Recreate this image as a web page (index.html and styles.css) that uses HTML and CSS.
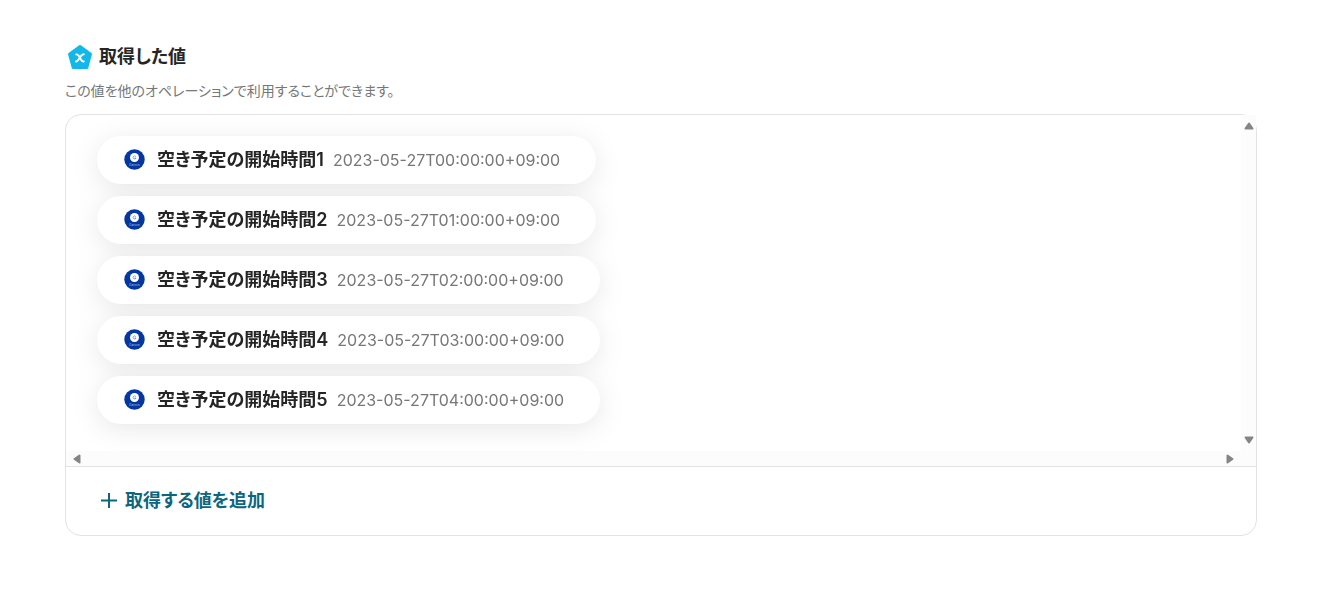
FILE: index.html
```html
<!DOCTYPE html>
<html lang="ja">
<head>
    <meta charset="UTF-8">
    <meta name="viewport" content="width=device-width, initial-scale=1.0">
    <title>取得した値</title>
    <link rel="stylesheet" href="styles.css">
</head>
<body>
    <svg class="symbols" aria-hidden="true">
        <symbol id="garoon" viewBox="0 0 22 22">
            <circle cx="10.500" cy="10.500" r="10.2" fill="#0537a0"/>
            <circle cx="10.500" cy="8.500" r="4.5" fill="#fff"/>
            <path d="M11.800 7.600a1.500 1.500 0 1 0 .2 1.400h-1.300" fill="none" stroke="#6a86cc" stroke-width="0.8"/>
            <text x="10.500" y="17" class="logo-text">Garoon</text>
        </symbol>
    </svg>

    <main class="output">
        <header class="output-header">
            <h1 class="title">
                <svg class="title-icon" viewBox="0 0 26 26" aria-hidden="true">
                    <path d="M13 2.5 23.5 10.2 19.8 23.500H6.2L2.5 10.2Z" fill="#12b8ea" stroke="#12b8ea" stroke-width="3" stroke-linejoin="round"/>
                    <path d="M9.200 10.400c1.600-.4 2.400.6 3.600 3.100s2.200 4.400 4 4M16.900 10.300c-1.500-.4-2.600.7-4 3.100s-2.200 4.300-3.900 4.100" fill="none" stroke="#fff" stroke-width="1.900" stroke-linecap="round"/>
                </svg>
                取得した値
            </h1>
            <p class="description">この値を他のオペレーションで利用することができます。</p>
        </header>

        <section class="panel">
            <div class="scroll-area">
                <ul class="values">
                    <li class="value">
                        <svg class="value-icon" aria-hidden="true"><use href="#garoon"/></svg>
                        <span class="value-name">空き予定の開始時間1</span>
                        <span class="value-sample">2023-05-27T00:00:00+09:00</span>
                    </li>
                    <li class="value">
                        <svg class="value-icon" aria-hidden="true"><use href="#garoon"/></svg>
                        <span class="value-name">空き予定の開始時間2</span>
                        <span class="value-sample">2023-05-27T01:00:00+09:00</span>
                    </li>
                    <li class="value">
                        <svg class="value-icon" aria-hidden="true"><use href="#garoon"/></svg>
                        <span class="value-name">空き予定の開始時間3</span>
                        <span class="value-sample">2023-05-27T02:00:00+09:00</span>
                    </li>
                    <li class="value">
                        <svg class="value-icon" aria-hidden="true"><use href="#garoon"/></svg>
                        <span class="value-name">空き予定の開始時間4</span>
                        <span class="value-sample">2023-05-27T03:00:00+09:00</span>
                    </li>
                    <li class="value">
                        <svg class="value-icon" aria-hidden="true"><use href="#garoon"/></svg>
                        <span class="value-name">空き予定の開始時間5</span>
                        <span class="value-sample">2023-05-27T04:00:00+09:00</span>
                    </li>
                </ul>
                <div class="track track-y" aria-hidden="true">
                    <svg class="arrow" viewBox="0 0 10 8"><path d="M5 1.500 8.500 6.500h-7Z"/></svg>
                    <svg class="arrow" viewBox="0 0 10 8"><path d="M5 6.500 1.500 1.500h7Z"/></svg>
                </div>
                <div class="track track-x" aria-hidden="true">
                    <svg class="arrow arrow-side" viewBox="0 0 8 10"><path d="M1.500 5 6.500 1.500v7Z"/></svg>
                    <svg class="arrow arrow-side" viewBox="0 0 8 10"><path d="M6.500 5 1.500 1.500v7Z"/></svg>
                </div>
                <div class="corner"></div>
            </div>
            <footer class="panel-footer">
                <button type="button" class="add-button">
                    <svg class="add-icon" viewBox="0 0 16 16" aria-hidden="true"><path d="M8 0v15M0 7.500h16"/></svg>
                    取得する値を追加
                </button>
            </footer>
        </section>
    </main>
</body>
</html>
```
FILE: styles.css
```css
:root {
    --border-color: #e3e3e3;
    --text-color: #252525;
    --muted-color: #777777;
    --link-color: #0b6680;
    --track-color: #fcfcfc;
}

* {
    margin: 0;
    padding: 0;
    box-sizing: border-box;
}

body {
    font-family: Inter, "Noto Sans CJK JP", sans-serif;
    font-feature-settings: "palt";
    background-color: #ffffff;
    color: var(--text-color);
}

.symbols {
    display: none;
}

.logo-text {
    font-size: 3px;
    text-anchor: middle;
    fill: #a9bde6;
}

.output {
    padding: 44px 69px 55px 65px;
}

.output-header {
    margin-bottom: 12px;
}

.title {
    display: flex;
    align-items: center;
    gap: 6px;
    padding-left: 2px;
    font-size: 18px;
    font-weight: 600;
    line-height: 26px;
}

.title-icon {
    width: 26px;
    height: 26px;
}

.description {
    margin-top: 10px;
    font-size: 14px;
    line-height: 22px;
    color: var(--muted-color);
}

.panel {
    border: 1px solid var(--border-color);
    border-radius: 16px;
}

.scroll-area {
    display: grid;
    grid-template-columns: 1fr 15px;
    grid-template-rows: auto 15px;
    border-bottom: 1px solid var(--border-color);
    overflow: hidden;
}

/* One shadow for the whole list, so it never falls on a neighbouring pill */
.values {
    display: flex;
    flex-direction: column;
    align-items: flex-start;
    gap: 12px;
    padding: 21px 31px 27px;
    list-style: none;
    filter: drop-shadow(0 0 1px rgba(0, 0, 0, 0.02)) drop-shadow(0 5px 13px rgba(0, 0, 0, 0.09));
}

.value {
    display: flex;
    align-items: center;
    height: 48px;
    padding: 0 36px 0 27px;
    border-radius: 24px;
    background-color: #ffffff;
    white-space: nowrap;
}

.value-icon {
    width: 22px;
    height: 22px;
    margin-right: 11px;
}

.value-name {
    margin-right: 9px;
    font-size: 18px;
    font-weight: 600;
    line-height: 24px;
}

.value-sample {
    font-size: 16px;
    line-height: 24px;
    color: var(--muted-color);
}

.track,
.corner {
    background-color: var(--track-color);
}

.track {
    display: flex;
    align-items: center;
    justify-content: space-between;
}

.track-y {
    flex-direction: column;
    padding: 7px 0;
}

.track-x {
    padding: 0 7px;
}

.arrow {
    width: 10px;
    height: 8px;
    fill: #858585;
    stroke: #858585;
    stroke-width: 2;
    stroke-linejoin: round;
}

.arrow-side {
    width: 8px;
    height: 10px;
}

.panel-footer {
    padding: 17px 32px;
}

.add-button {
    display: flex;
    align-items: center;
    gap: 8px;
    height: 34px;
    padding: 0 3px;
    border: none;
    background: none;
    color: var(--link-color);
    font: inherit;
    font-feature-settings: inherit;
    font-size: 18px;
    font-weight: 600;
    line-height: 24px;
    cursor: pointer;
}

.add-icon {
    width: 16px;
    height: 16px;
    fill: none;
    stroke: currentColor;
    stroke-width: 2;
}
```
